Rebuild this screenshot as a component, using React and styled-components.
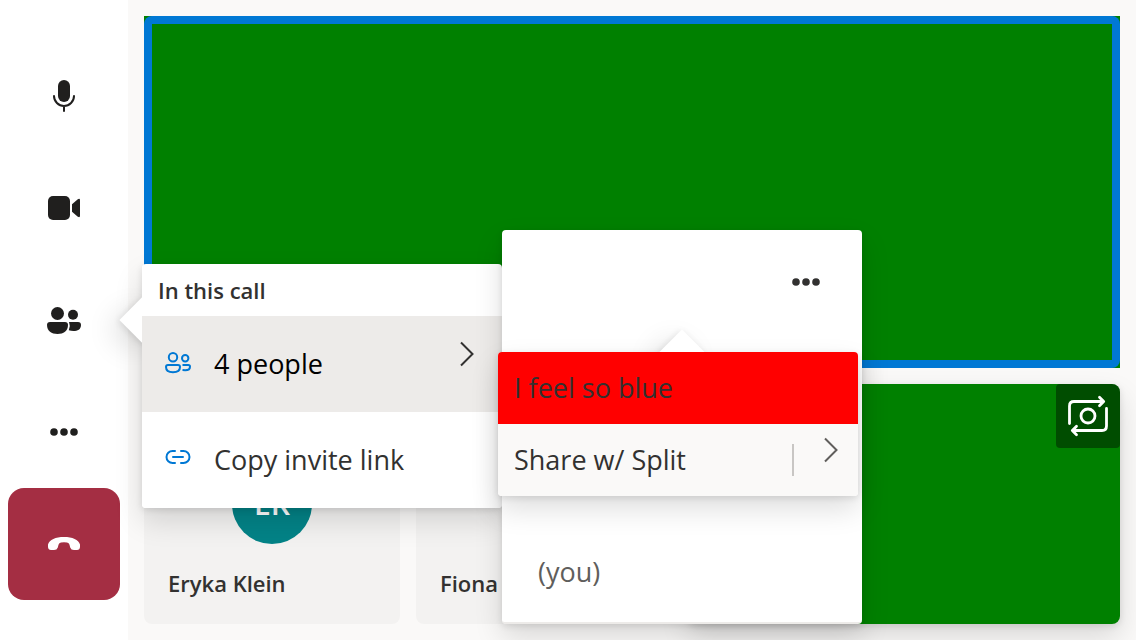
import React from "react";
import styled, { createGlobalStyle } from "styled-components";

const GlobalStyle = createGlobalStyle`
  *, *::before, *::after { box-sizing: border-box; }
  body {
    margin: 0;
    background: #faf9f8;
    color: #323130;
    font-family: "Open Sans", "Noto Sans", sans-serif;
  }
  button {
    margin: 0;
    padding: 0;
    border: 0;
    background: none;
    color: inherit;
    font: inherit;
    text-align: left;
    cursor: pointer;
  }
  svg { display: block; flex: none; }
`;

const shadow = "0 13px 29px rgba(0, 0, 0, 0.132), 0 2px 7px rgba(0, 0, 0, 0.108)";

const Screen = styled.div`
  display: flex;
  min-height: 100vh;
  overflow: hidden;
`;

const Rail = styled.nav`
  position: relative;
  z-index: 1;
  flex: none;
  display: flex;
  flex-direction: column;
  justify-content: center;
  padding: 0 8px;
  width: 128px;
  background: #fff;
`;

const RailItem = styled.div`
  position: relative;
`;

const RailButton = styled.button`
  display: grid;
  place-items: center;
  width: 112px;
  height: 112px;
  border-radius: 16px;
  color: ${(p) => (p.$danger ? "#fff" : "#201f1e")};
  background: ${(p) => (p.$danger ? "#a42e43" : "transparent")};
`;

const Stage = styled.main`
  flex: 1;
  min-width: 0;
  display: flex;
  flex-direction: column;
  gap: 16px;
  padding: 16px;
`;

const MainVideo = styled.section`
  flex: 1;
  display: flex;
  background: green;
`;

const SpeakingFrame = styled.div`
  flex: 1;
  display: flex;
  padding: 8px;
  border-radius: 8px;
  background: #0078d4;
`;

const VideoSurface = styled.div`
  flex: 1;
  background: green;
`;

const Gallery = styled.section`
  flex: none;
  display: flex;
  gap: 16px;
  height: 240px;
`;

const Tile = styled.article`
  flex: none;
  display: grid;
  grid-template-rows: 1fr 80px 1fr;
  justify-items: center;
  width: 256px;
  padding: 0 24px;
  border-radius: 8px;
  background: #f3f2f1;
`;

const Avatar = styled.div`
  grid-row: 2;
  display: grid;
  place-items: center;
  width: 80px;
  height: 80px;
  border-radius: 50%;
  background: #038387;
  color: #fff;
  font-size: 30px;
  line-height: 40px;
  font-weight: 600;
`;

const TileName = styled.div`
  grid-row: 3;
  justify-self: start;
  align-self: center;
  padding-bottom: 2px;
  font-size: 22px;
  line-height: 32px;
  font-weight: 600;
  white-space: nowrap;
`;

const LocalTile = styled.article`
  flex: 1;
  display: flex;
  justify-content: flex-end;
  align-items: flex-start;
  border-radius: 8px;
  background: green;
  box-shadow: ${shadow};
`;

const SwitchCamera = styled.button`
  display: grid;
  place-items: center;
  width: 64px;
  height: 64px;
  border-radius: 4px 8px 4px 4px;
  background: rgba(0, 0, 0, 0.4);
  color: #fff;
`;

const Callout = styled.div`
  position: absolute;
  width: 360px;
  border-radius: 4px;
  box-shadow: ${shadow};
`;

const PeopleCallout = styled(Callout)`
  left: 134px;
  top: 0;
`;

const RosterCallout = styled(Callout)`
  left: 100%;
  top: -34px;
`;

const PersonCallout = styled(Callout)`
  left: -4px;
  top: 122px;
`;

const Beak = styled.div`
  position: absolute;
  width: 32px;
  height: 32px;
  left: ${(p) => (p.$side === "top" ? "168px" : "-16px")};
  top: ${(p) => (p.$side === "top" ? "-16px" : "40px")};
  background: #fff;
  box-shadow: ${shadow};
  transform: rotate(45deg);
`;

const Surface = styled.div`
  position: relative;
  overflow: hidden;
  border-radius: 4px;
  background: #fff;
`;

const RosterSurface = styled(Surface)`
  padding: 4px 0;
  border-bottom: 2px solid #edebe9;
`;

const MenuHeader = styled.h2`
  margin: 0;
  padding: 10px 16px;
  font-size: 22px;
  line-height: 32px;
  font-weight: 600;
`;

const MenuItem = styled.button`
  display: grid;
  grid-template-columns: 28px 1fr auto;
  align-items: center;
  column-gap: 22px;
  width: 100%;
  height: 96px;
  padding: 0 28px 0 22px;
  font-size: 27px;
  line-height: 40px;
  color: ${(p) => (p.$active ? "#000" : "#323130")};
  background: ${(p) => (p.$active ? "#edebe9" : "#fff")};
`;

const ChevronSlot = styled.span`
  padding-bottom: 20px;
  color: #323130;
`;

const IconSlot = styled.span`
  padding-bottom: ${(p) => (p.$raised ? "6px" : "2px")};
`;

const RosterRow = styled.div`
  display: flex;
  align-items: center;
  justify-content: space-between;
  height: 96px;
  padding: 0 42px 0 36px;
  font-size: 27px;
  line-height: 40px;
  color: #605e5c;
`;

const RosterSuffix = styled.span`
  padding-top: 4px;
`;

const MoreButton = styled.button`
  margin-left: auto;
  color: #323130;
`;

const ActionRow = styled.div`
  display: flex;
  align-items: center;
  height: 72px;
  background: ${(p) => (p.$highlight ? "#f00" : "#faf9f8")};
`;

const ActionButton = styled.button`
  flex: 1;
  align-self: stretch;
  padding: 0 16px;
  font-size: 27px;
  line-height: 40px;
`;

const Divider = styled.span`
  width: 2px;
  height: 32px;
  background: #c8c6c4;
`;

const SplitButton = styled.button`
  align-self: stretch;
  display: flex;
  align-items: center;
  justify-content: flex-end;
  width: 64px;
  padding: 0 20px 20px 0;
  color: #605e5c;
`;

const MicIcon = () => (
  <svg width="32" height="32" viewBox="0 0 32 32" aria-hidden="true">
    <rect x="10" y="0" width="12" height="22" rx="6" fill="currentColor" />
    <path d="M6 16a10 10 0 0 0 20 0M16 26v5" fill="none" stroke="currentColor" strokeWidth="2" strokeLinecap="round" />
  </svg>
);

const VideoIcon = () => (
  <svg width="32" height="32" viewBox="0 0 32 32" fill="currentColor" aria-hidden="true">
    <rect x="0" y="4" width="22" height="24" rx="5" />
    <path d="M24 12.2 29.8 7.3Q32 6 32 8.2V23.8Q32 26 29.8 24.7L24 19.8Z" />
  </svg>
);

const PeopleFilledIcon = () => (
  <svg width="34" height="32" viewBox="0 0 34 32" fill="currentColor" aria-hidden="true">
    <circle cx="10.5" cy="9.5" r="6.5" />
    <circle cx="26" cy="10.8" r="5" />
    <path d="M3 18H18q3 0 3 3C21 27 16.500 30 10.500 30S0 27 0 21Q0 18 3 18Z" />
    <path d="M22 18H31q3 0 3 3C34 25.500 30.500 27 26.500 27Q24 27 21.800 26.200 23.700 22 22 18Z" />
  </svg>
);

const MoreIcon = () => (
  <svg width="28" height="8" viewBox="0 0 28 8" fill="currentColor" aria-hidden="true">
    <circle cx="4" cy="4" r="3.8" />
    <circle cx="14" cy="4" r="3.8" />
    <circle cx="24" cy="4" r="3.8" />
  </svg>
);

const HangUpIcon = () => (
  <svg width="32" height="14" viewBox="0 0 32 14" fill="currentColor" aria-hidden="true">
    <path d="M16 0C24.500 0 30.500 2.500 32 7.500V10Q31.800 13 29 13H26Q23 13 22.200 10.500L21.500 7.800Q21 6 19 5.600 16 5.100 13 5.600 11 6 10.500 7.800L9.800 10.500Q9 13 6 13H3Q.2 13 0 10V7.500C1.500 2.500 7.500 0 16 0Z" />
  </svg>
);

const PeopleOutlineIcon = () => (
  <svg width="28" height="22" viewBox="0 0 28 22" fill="none" stroke="#0078d4" strokeWidth="2" aria-hidden="true">
    <circle cx="9" cy="5.200" r="4.200" />
    <circle cx="21.200" cy="6.200" r="3.200" />
    <path d="M4 13H14Q16 13 16 15C16 18.800 13 20.200 9 20.200S2 18.800 2 15Q2 13 4 13Z" />
    <path d="M18.500 13H24.300Q26 13 26 14.700C26 17.500 23.500 18.200 21.200 18.200L18.500 18" />
  </svg>
);

const LinkIcon = () => (
  <svg width="28" height="16" viewBox="0 0 28 16" fill="none" stroke="#0078d4" strokeWidth="2" strokeLinecap="round" aria-hidden="true">
    <path d="M11 2H8.500a6 6 0 0 0 0 12H11M17 2h2.500a6 6 0 0 1 0 12H17M9 8h10" />
  </svg>
);

const ChevronIcon = () => (
  <svg width="14" height="26" viewBox="0 0 14 26" fill="none" stroke="currentColor" strokeWidth="2" aria-hidden="true">
    <path d="M1 1.500 12.500 13 1 24.500" />
  </svg>
);

const SwitchCameraIcon = () => (
  <svg width="42" height="42" viewBox="0 0 42 42" fill="none" stroke="currentColor" strokeWidth="2.800" strokeLinecap="round" strokeLinejoin="round" aria-hidden="true">
    <path d="M2.500 28.500V11Q2.500 6.500 7 6.500H36.500M32.500 2.300 36.700 6.500 32.500 10.700" />
    <path d="M39.500 13.500V31Q39.500 35.500 35 35.500H5.500M9.500 31.300 5.300 35.500 9.500 39.700" />
    <circle cx="21" cy="21" r="7" />
  </svg>
);

export default function App() {
  return (
    <>
      <GlobalStyle />
      <Screen>
        <Rail aria-label="Call controls">
          <RailButton aria-label="Mute"><MicIcon /></RailButton>
          <RailButton aria-label="Turn off camera"><VideoIcon /></RailButton>
          <RailItem>
            <RailButton aria-label="People"><PeopleFilledIcon /></RailButton>
            <PeopleCallout>
              <Beak />
              <Surface>
                <MenuHeader>In this call</MenuHeader>
                <MenuItem $active>
                  <IconSlot><PeopleOutlineIcon /></IconSlot>
                  <span>4 people</span>
                  <ChevronSlot><ChevronIcon /></ChevronSlot>
                </MenuItem>
                <MenuItem>
                  <IconSlot $raised><LinkIcon /></IconSlot>
                  <span>Copy invite link</span>
                </MenuItem>
              </Surface>
              <RosterCallout>
                <RosterSurface>
                  <RosterRow>
                    <MoreButton aria-label="More options"><MoreIcon /></MoreButton>
                  </RosterRow>
                  <RosterRow />
                  <RosterRow />
                  <RosterRow><RosterSuffix>(you)</RosterSuffix></RosterRow>
                </RosterSurface>
                <PersonCallout>
                  <Beak $side="top" />
                  <Surface>
                    <ActionRow $highlight>
                      <ActionButton>I feel so blue</ActionButton>
                    </ActionRow>
                    <ActionRow>
                      <ActionButton>Share w/ Split</ActionButton>
                      <Divider />
                      <SplitButton aria-label="Share options"><ChevronIcon /></SplitButton>
                    </ActionRow>
                  </Surface>
                </PersonCallout>
              </RosterCallout>
            </PeopleCallout>
          </RailItem>
          <RailButton aria-label="More"><MoreIcon /></RailButton>
          <RailButton $danger aria-label="Leave call"><HangUpIcon /></RailButton>
        </Rail>
        <Stage>
          <MainVideo>
            <SpeakingFrame><VideoSurface /></SpeakingFrame>
          </MainVideo>
          <Gallery>
            <Tile>
              <Avatar>EK</Avatar>
              <TileName>Eryka Klein</TileName>
            </Tile>
            <Tile>
              <TileName>Fiona</TileName>
            </Tile>
            <LocalTile>
              <SwitchCamera aria-label="Switch camera"><SwitchCameraIcon /></SwitchCamera>
            </LocalTile>
          </Gallery>
        </Stage>
      </Screen>
    </>
  );
}
